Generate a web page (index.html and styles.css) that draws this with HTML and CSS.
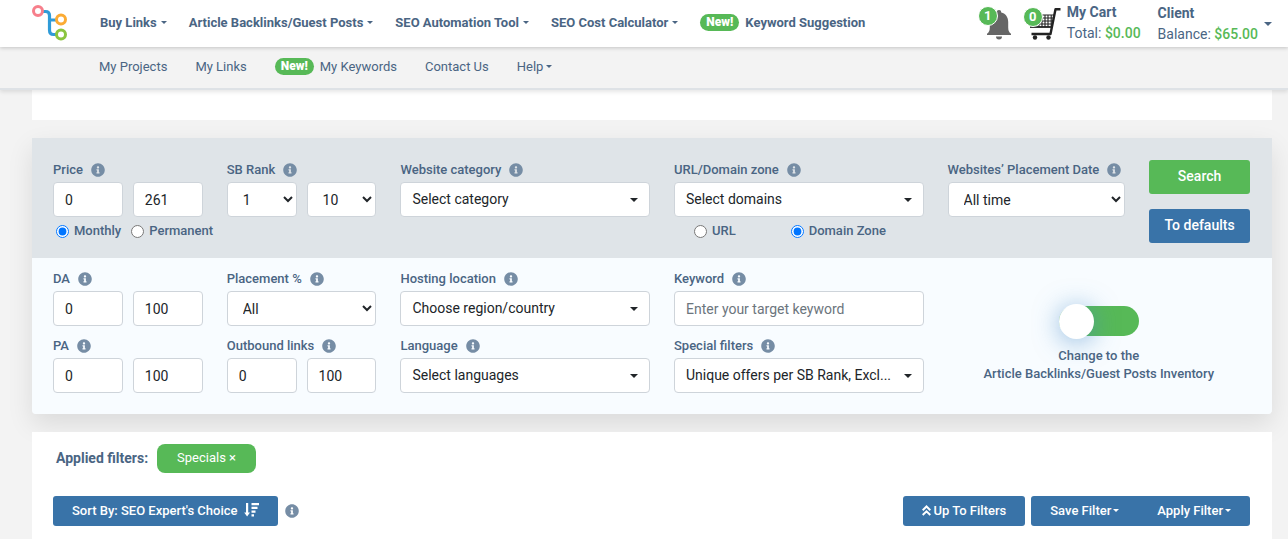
FILE: index.html
```html
<!DOCTYPE html>
<html lang="en">
<head>
<meta charset="utf-8">
<meta name="viewport" content="width=device-width, initial-scale=1">
<title>Buy Links</title>
<link rel="stylesheet" href="styles.css">
</head>
<body>
<svg class="sprite" aria-hidden="true">
  <symbol id="info" viewBox="0 0 512 512"><path d="M256 8C119.043 8 8 119.083 8 256c0 136.997 111.043 248 248 248s248-111.003 248-248C504 119.083 392.957 8 256 8zm0 110c23.196 0 42 18.804 42 42s-18.804 42-42 42-42-18.804-42-42 18.804-42 42-42zm56 254c0 6.627-5.373 12-12 12h-88c-6.627 0-12-5.373-12-12v-24c0-6.627 5.373-12 12-12h12v-64h-12c-6.627 0-12-5.373-12-12v-24c0-6.627 5.373-12 12-12h64c6.627 0 12 5.373 12 12v100h12c6.627 0 12 5.373 12 12v24z"/></symbol>
</svg>

<header class="header">
  <div class="topbar">
    <a class="logo" href="#" aria-label="Home">
      <svg width="36" height="37" viewBox="0 0 36 37" fill="none">
        <path d="M11 6.500h2.500q4 0 4 4V25q0 4.500 4 4.500H24M17.500 15H24" stroke="#2f9bd8" stroke-width="3.200"/>
        <circle cx="6" cy="6" r="4.500" stroke="#f77f8b" stroke-width="3"/>
        <circle cx="29" cy="14.500" r="4.500" stroke="#fbab34" stroke-width="3"/>
        <circle cx="29" cy="29.500" r="4.500" stroke="#8bc53f" stroke-width="3"/>
      </svg>
    </a>
    <nav class="nav nav-main" aria-label="Main">
      <a class="caret" href="#">Buy Links</a>
      <a class="caret" href="#">Article Backlinks/Guest Posts</a>
      <a class="caret" href="#">SEO Automation Tool</a>
      <a class="caret" href="#">SEO Cost Calculator</a>
      <a href="#"><span class="new">New!</span>Keyword Suggestion</a>
    </nav>
    <div class="account">
      <a class="icon-link bell" href="#" aria-label="Notifications">
        <svg width="24" height="30" viewBox="0 0 24 30" fill="#666">
          <path d="M12 0a2.200 2.200 0 0 1 2.200 2.400C19 3.500 21.200 7.500 21.200 12v5.500q0 4.500 2.800 6.200V25H0v-1.300q2.800-1.700 2.800-6.200V12C2.800 7.500 5 3.500 9.800 2.400A2.200 2.200 0 0 1 12 0z"/>
          <path d="M9 26.500h6a3 3 0 0 1-6 0z"/>
        </svg>
        <span class="count">1</span>
      </a>
      <a class="icon-link cart" href="#" aria-label="Cart">
        <svg width="33" height="32" viewBox="0 0 33 32" fill="none" stroke="#222">
          <path d="M32.500 1.200H27.500L22.500 26H3.500" stroke-width="2.400" stroke-linejoin="round"/>
          <path d="M2 19h21.500" stroke-width="1.800"/>
          <path d="M4 7h22M4 10h21.500M4 13h21M4 16h20.500M11 7v12M14 7v12M17 7v12M20 7v12M23.200 7v11" stroke-width="1.100"/>
          <circle cx="7" cy="29.500" r="2.200" fill="#222" stroke="none"/>
          <circle cx="20.500" cy="29.500" r="2.200" fill="#222" stroke="none"/>
        </svg>
        <span class="count">0</span>
      </a>
      <a class="summary" href="#"><b>My Cart</b><span>Total: <em>$0.00</em></span></a>
      <a class="summary client caret-end" href="#"><span class="summary-text"><b>Client</b><span>Balance: <em>$65.00</em></span></span></a>
    </div>
  </div>
  <nav class="nav nav-sub" aria-label="Account">
    <a href="#">My Projects</a>
    <a href="#">My Links</a>
    <a href="#"><span class="new">New!</span>My Keywords</a>
    <a href="#">Contact Us</a>
    <a class="caret" href="#">Help</a>
  </nav>
</header>

<main class="page">
  <div class="strip"></div>

  <form class="filters">
    <div class="row row-main">
      <div class="field">
        <div class="label"><label for="price-min">Price</label><svg class="info"><use href="#info"/></svg></div>
        <div class="pair"><input class="control" id="price-min" value="0"><input class="control" aria-label="Price to" value="261"></div>
        <div class="radios">
          <label><input type="radio" name="period" checked>Monthly</label>
          <label><input type="radio" name="period">Permanent</label>
        </div>
      </div>
      <div class="field">
        <div class="label"><label for="rank-min">SB Rank</label><svg class="info"><use href="#info"/></svg></div>
        <div class="pair">
          <select class="control" id="rank-min"><option>1</option></select>
          <select class="control" aria-label="SB Rank to"><option>10</option></select>
        </div>
      </div>
      <div class="field">
        <div class="label"><label for="category">Website category</label><svg class="info"><use href="#info"/></svg></div>
        <div class="picker"><select class="control" id="category"><option>Select category</option></select></div>
      </div>
      <div class="field">
        <div class="label"><label for="zone">URL/Domain zone</label><svg class="info"><use href="#info"/></svg></div>
        <div class="picker"><select class="control" id="zone"><option>Select domains</option></select></div>
        <div class="radios radios-zone">
          <label><input type="radio" name="zone-type">URL</label>
          <label><input type="radio" name="zone-type" checked>Domain Zone</label>
        </div>
      </div>
      <div class="field">
        <div class="label"><label for="date">Websites’ Placement Date</label><svg class="info"><use href="#info"/></svg></div>
        <select class="control" id="date"><option>All time</option></select>
      </div>
      <div class="actions">
        <button class="btn btn-green" type="submit">Search</button>
        <button class="btn" type="reset">To defaults</button>
      </div>
    </div>

    <div class="row row-more">
      <div class="field">
        <div class="label"><label for="da">DA</label><svg class="info"><use href="#info"/></svg></div>
        <div class="pair"><input class="control" id="da" value="0"><input class="control" aria-label="DA to" value="100"></div>
      </div>
      <div class="field">
        <div class="label"><label for="placement">Placement %</label><svg class="info"><use href="#info"/></svg></div>
        <select class="control" id="placement"><option>All</option></select>
      </div>
      <div class="field">
        <div class="label"><label for="hosting">Hosting location</label><svg class="info"><use href="#info"/></svg></div>
        <div class="picker"><select class="control" id="hosting"><option>Choose region/country</option></select></div>
      </div>
      <div class="field">
        <div class="label"><label for="keyword">Keyword</label><svg class="info"><use href="#info"/></svg></div>
        <input class="control" id="keyword" placeholder="Enter your target keyword">
      </div>
      <label class="switch">
        <input type="checkbox">
        <span>Change to the<br>Article Backlinks/Guest Posts Inventory</span>
      </label>
      <div class="field">
        <div class="label"><label for="pa">PA</label><svg class="info"><use href="#info"/></svg></div>
        <div class="pair"><input class="control" id="pa" value="0"><input class="control" aria-label="PA to" value="100"></div>
      </div>
      <div class="field">
        <div class="label"><label for="outbound">Outbound links</label><svg class="info"><use href="#info"/></svg></div>
        <div class="pair"><input class="control" id="outbound" value="0"><input class="control" aria-label="Outbound links to" value="100"></div>
      </div>
      <div class="field">
        <div class="label"><label for="language">Language</label><svg class="info"><use href="#info"/></svg></div>
        <div class="picker"><select class="control" id="language"><option>Select languages</option></select></div>
      </div>
      <div class="field">
        <div class="label"><label for="special">Special filters</label><svg class="info"><use href="#info"/></svg></div>
        <div class="picker"><select class="control" id="special"><option>Unique offers per SB Rank, Excl...</option></select></div>
      </div>
    </div>
  </form>

  <section class="results">
    <div class="applied"><span>Applied filters:</span><button class="chip" type="button">Specials ×</button></div>
    <div class="toolbar">
      <button class="btn btn-small" type="button">Sort By: SEO Expert's Choice
        <svg class="sort-icon" width="15" height="14" viewBox="0 0 15 14" fill="#fff"><path d="M2 0h2.200v9.500H6L3.100 13.500.2 9.500H2zM7.500 0H15v2.200H7.500zM7.500 3.800h6V6h-6zM7.500 7.600h4v2.200h-4zM7.500 11.300H10v2.200H7.500z"/></svg>
      </button>
      <svg class="info"><use href="#info"/></svg>
      <div class="toolbar-end">
        <button class="btn btn-small" type="button"><svg class="up-icon" width="9" height="11" viewBox="0 0 9 11" fill="none" stroke="#fff" stroke-width="2"><path d="M.7 5.200l3.800-3.700 3.800 3.700M.7 10l3.800-3.700L8.300 10"/></svg>Up To Filters</button>
        <div class="btn-group">
          <button class="btn btn-small caret" type="button">Save Filter</button>
          <button class="btn btn-small caret" type="button">Apply Filter</button>
        </div>
      </div>
    </div>
  </section>
</main>
</body>
</html>
```

FILE: styles.css
```css
* { box-sizing: border-box; }

body {
  margin: 0;
  background: #f3f3f3;
  color: #4a6583;
  font: 13px/18px Roboto, "Liberation Sans", sans-serif;
}

a { color: inherit; text-decoration: none; }
button, input, select { font-family: inherit; }
.sprite { position: absolute; width: 0; height: 0; }

/* Header */
.header {
  position: relative;
  z-index: 1;
  border-bottom: 2px solid #dee2e6;
  background: #f3f3f3;
  box-shadow: 0 2px 4px rgba(0, 0, 0, .1);
}

.topbar {
  display: flex;
  align-items: center;
  height: 47px;
  padding: 0 16px 0 32px;
  background: #fff;
  box-shadow: 0 1px 4px rgba(0, 0, 0, .2);
}

.logo { display: flex; width: 68px; }
.nav { display: flex; align-items: center; white-space: nowrap; }
.nav a { display: flex; align-items: center; }
.nav-main { gap: 22px; padding-bottom: 2px; font-size: 13px; font-weight: 700; }
.nav-sub { gap: 28px; height: 41px; padding: 0 99px 2px; }

.caret::after {
  content: "";
  display: inline-block;
  margin-left: 4px;
  border: 3px solid transparent;
  border-top-color: currentColor;
  border-bottom: 0;
}

.nav-sub .caret::after { margin-left: 3px; }

.new {
  margin-right: 6px;
  padding: 0 6px;
  border-radius: 9px;
  background: #57b957;
  color: #fff;
  font-size: 12px;
  font-weight: 900;
  line-height: 17px;
}

.account { display: flex; align-items: center; margin-left: auto; }
.icon-link { position: relative; display: flex; }
.bell { padding: 3px 0 0; margin-right: 17px; }
.cart { margin-right: 6px; }
.count {
  position: absolute;
  top: -1px;
  left: -9px;
  width: 20px;
  height: 20px;
  border: 1px solid #fff;
  border-radius: 50%;
  background: #57b957;
  color: #fff;
  font-size: 13px;
  font-weight: 700;
  line-height: 18px;
  text-align: center;
}
.cart .count { left: -5px; }

.summary { display: block; padding-bottom: 2px; font-size: 14px; line-height: 21px; white-space: nowrap; }
.summary b, .summary-text { display: block; }
.summary b { font-weight: 700; }
.summary em { color: #57b957; font-style: normal; font-weight: 500; }
.client { display: flex; align-items: center; gap: 6px; margin-left: 17px; padding-bottom: 0; }
.caret-end::after { content: ""; border: 4px solid transparent; border-top-color: currentColor; border-bottom: 0; }

/* Page blocks */
.page { padding: 0 16px 0 32px; }
.strip { height: 30px; margin-bottom: 18px; background: #fff; }

.filters {
  margin-bottom: 18px;
  border-radius: 0 0 4px 4px;
  box-shadow: 0 10px 26px rgba(0, 0, 0, .1);
}

.row {
  display: grid;
  grid-template-columns: 150fr 150fr 250fr 250fr 178fr 101fr;
  gap: 10px 24px;
  padding: 0 22px 0 21px;
}

.row-main { min-height: 120px; padding-top: 22px; background: #dfe4e8; }
.row-more { padding-top: 11px; padding-bottom: 21px; border-radius: 0 0 4px 4px; background: #f8fcff; }

.field { min-width: 0; }
.label {
  display: flex;
  align-items: center;
  gap: 8px;
  height: 19px;
  margin-bottom: 3px;
  font-weight: 500;
  white-space: nowrap;
}
.info { flex: none; width: 14px; height: 14px; fill: #768da5; }

.control {
  display: block;
  width: 100%;
  height: 35px;
  padding: 0 11px;
  border: 1px solid #ced4da;
  border-radius: 4px;
  background: #fff;
  color: #212529;
  font-size: 14px;
}
.control::placeholder { color: #6c757d; }
select.control { padding: 0 0 0 11px; }

.pair { display: grid; grid-template-columns: 1fr 1fr; gap: 10px; }
.picker { position: relative; }
.picker .control { appearance: none; padding: 0 24px 1px 11px; }
.picker::after {
  content: "";
  position: absolute;
  top: 16px;
  right: 12px;
  border: 4px solid transparent;
  border-top-color: #212529;
  border-bottom: 0;
  pointer-events: none;
}

.radios { display: flex; gap: 10px; margin-top: 5px; padding-left: 3px; font-weight: 500; white-space: nowrap; }
.radios label { display: flex; align-items: center; gap: 5px; }
.radios input { width: 13px; height: 13px; margin: 0; accent-color: #0075ff; }
.radios-zone { gap: 55px; padding-left: 20px; }

.actions { display: flex; flex-direction: column; gap: 15px; }
.btn {
  height: 34px;
  padding: 0 6px 2px;
  border: 0;
  border-radius: 3px;
  background: #3973a8;
  color: #fff;
  font-size: 14px;
  font-weight: 500;
  white-space: nowrap;
}
.btn-green { background: #57b957; }

.switch {
  display: flex;
  grid-column: 5 / 7;
  grid-row: 1 / 3;
  flex-direction: column;
  align-items: center;
  gap: 11px;
  padding-top: 37px;
  font-weight: 500;
  text-align: center;
}
.switch input {
  appearance: none;
  display: flex;
  align-items: center;
  width: 80px;
  height: 30px;
  margin: 0;
  border-radius: 15px;
  background: #57b957;
}
.switch input::before {
  content: "";
  flex: none;
  width: 35px;
  height: 35px;
  border-radius: 50%;
  background: #fff;
  box-shadow: 0 3px 26px rgba(70, 140, 200, .6);
}

/* Results */
.results { padding: 12px 22px 13px 21px; background: #fff; }
.applied { display: flex; align-items: center; gap: 9px; padding-left: 3px; font-size: 14px; font-weight: 700; }
.applied span { padding-bottom: 2px; }
.chip {
  height: 29px;
  padding: 0 20px 2px;
  border: 0;
  border-radius: 8px;
  background: #57b957;
  color: #fff;
  font-size: 13px;
  font-weight: 400;
}
.toolbar { display: flex; align-items: center; gap: 7px; margin-top: 23px; }
.toolbar-end { display: flex; gap: 6px; margin-left: auto; }
.btn-small { height: 30px; padding: 0 19px 2px; font-size: 13px; }
.btn-small.caret::after { margin-left: 2px; vertical-align: 3px; }
.sort-icon { margin-left: 3px; vertical-align: -2px; }
.up-icon { margin-right: 2px; vertical-align: -1px; }
.btn-group { display: flex; }
.btn-group .btn:first-child { border-radius: 3px 0 0 3px; }
.btn-group .btn:last-child { border-radius: 0 3px 3px 0; }
```
